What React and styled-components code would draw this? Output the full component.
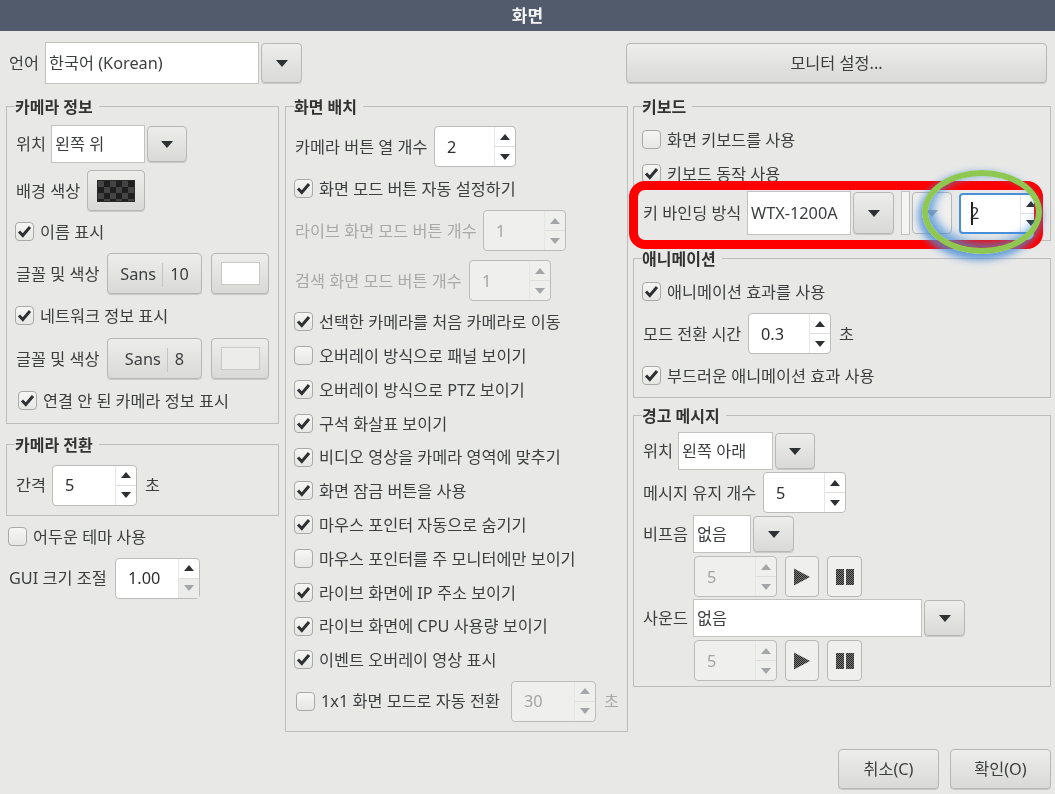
import React from "react";
import styled, { createGlobalStyle } from "styled-components";

const Global = createGlobalStyle`
  html, body { margin: 0; padding: 0; background: #e8e8e7; }
  * { box-sizing: border-box; }
`;

const Page = styled.div`
  position: relative;
  width: 1055px;
  height: 794px;
  overflow: hidden;
  background: #e8e8e7;
  color: #3c3e3f;
  font: 16.3px/1.2 "Noto Sans", "Noto Sans CJK KR", sans-serif;
  filter: blur(0.4px);
`;
const TitleBar = styled.div`
  height: 31px;
  padding-top: 2px;
  background: #515b6b;
  color: #f4f4f4;
  font-size: 17px;
  font-weight: 700;
  display: flex;
  align-items: center;
  justify-content: center;
`;
const Body = styled.div`
  padding: 11px 4px 0 6px;
`;
const TopRow = styled.div`
  display: flex;
  align-items: center;
  height: 42px;
`;
const Columns = styled.div`
  display: flex;
  align-items: flex-start;
  margin-top: 11px;
`;
const Column = styled.div`
  width: ${(p) => p.$w}px;
  margin-left: ${(p) => p.$ml || 0}px;
  flex: none;
`;
const Group = styled.fieldset`
  margin: ${(p) => p.$mt || 0}px 0 0;
  padding: ${(p) => p.$pt ?? 6}px 8px 0;
  height: ${(p) => p.$h}px;
  border: 1px solid #bdbdbb;
  min-width: 0;
`;
const Legend = styled.legend`
  padding: 0 6px 0 0;
  height: 22px;
  line-height: 24px;
  font-size: 16px;
  font-weight: 700;
  color: #333;
`;
const Row = styled.div`
  display: flex;
  align-items: center;
  height: ${(p) => p.$h}px;
  margin-top: ${(p) => p.$mt || 0}px;
  margin-left: ${(p) => p.$ml || 0}px;
`;
const Label = styled.span`
  flex: none;
  width: ${(p) => (p.$w ? `${p.$w}px` : "auto")};
  padding: 2px 0 0 ${(p) => p.$pl ?? 1}px;
  white-space: nowrap;
  color: ${(p) => (p.$off ? "#a9a9a9" : "inherit")};
`;
const Unit = styled.span`
  margin-left: 8px;
  padding-top: 2px;
  color: ${(p) => (p.$off ? "#a9a9a9" : "inherit")};
`;
const Field = styled.div`
  flex: none;
  width: ${(p) => p.$w}px;
  height: ${(p) => p.$h || 38}px;
  background: #fff;
  border: 1px solid #c2c2c0;
  padding: 2px 0 0 3px;
  display: flex;
  align-items: center;
  white-space: nowrap;
`;
const Btn = styled.div`
  flex: none;
  width: ${(p) => p.$w}px;
  height: ${(p) => p.$h || 40}px;
  margin-left: ${(p) => p.$ml || 0}px;
  display: flex;
  align-items: center;
  justify-content: center;
  border: 1px solid #b7b7b5;
  border-radius: 4px;
  background: ${(p) => (p.$flat ? "#efefee" : "linear-gradient(#ededec, #d9d9d8)")};
  box-shadow: ${(p) => (p.$flat ? "none" : "0 1px 0 #c9c9c7")};
  white-space: nowrap;
`;
const TextBtn = styled(Btn)`
  padding-top: 2px;
`;
const MonitorBtn = styled(TextBtn)`
  margin-left: auto;
  margin-right: 4px;
`;
const Tri = styled.i`
  display: block;
  width: 0;
  height: 0;
  border-left: 6px solid transparent;
  border-right: 6px solid transparent;
  border-top: 7px solid ${(p) => (p.$off ? "#a3a6a8" : "#2e3133")};
`;
const SmallDown = styled.i`
  display: block;
  width: 0;
  height: 0;
  border-left: 5px solid transparent;
  border-right: 5px solid transparent;
  border-top: 6px solid ${(p) => (p.$off ? "#a3a6a8" : "#2e3133")};
`;
const SmallUp = styled(SmallDown)`
  border-top: 0;
  border-bottom: 6px solid ${(p) => (p.$off ? "#a3a6a8" : "#2e3133")};
`;

function Combo({ w, h, bw = 41, children }) {
  return (
    <>
      <Field $w={w} $h={h}>{children}</Field>
      <Btn $w={bw} $h={(h || 38) - 2} $ml={2}><Tri /></Btn>
    </>
  );
}

const SpinBox = styled.div`
  position: relative;
  flex: none;
  width: ${(p) => p.$w || 83}px;
  height: ${(p) => p.$h || 41}px;
  display: flex;
  background: ${(p) => (p.$off ? "#efefee" : "#fff")};
  color: ${(p) => (p.$off ? "#a5a5a5" : "#2f2f2f")};
  border: ${(p) => (p.$focus ? "2px solid #4a90d9" : "1px solid #bcbcba")};
  border-radius: 4px;
`;
const SpinValue = styled.div`
  flex: 1;
  display: flex;
  align-items: center;
  padding: 2px 0 0 ${(p) => p.$pl ?? 12}px;
  border-right: 1px solid #e6e6e5;
`;
const SpinArrows = styled.div`
  flex: none;
  width: 20px;
  display: flex;
  flex-direction: column;
`;
const SpinArrow = styled.div`
  flex: 1;
  display: flex;
  align-items: center;
  justify-content: center;
  background: ${(p) => (p.$shade ? "#ececeb" : "transparent")};
  & + & { border-top: 1px solid #dededd; }
`;
const Caret = styled.b`
  position: absolute;
  left: 10px;
  top: 7px;
  width: 1.5px;
  height: 23px;
  background: #222;
`;

function Spin({ value, off, w, focus, pl, atMin }) {
  return (
    <SpinBox $off={off} $w={w} $focus={focus}>
      {focus && <Caret />}
      <SpinValue $pl={pl}>{value}</SpinValue>
      <SpinArrows>
        <SpinArrow><SmallUp $off={off} /></SpinArrow>
        <SpinArrow $shade={atMin}><SmallDown $off={off || atMin} /></SpinArrow>
      </SpinArrows>
    </SpinBox>
  );
}

const CheckWrap = styled.div`
  display: flex;
  align-items: center;
  flex: none;
  width: ${(p) => (p.$w ? `${p.$w}px` : "auto")};
  white-space: nowrap;
`;
const CheckText = styled.span`
  padding-top: 2px;
`;
const Box = styled.span`
  flex: none;
  width: 19px;
  height: 19px;
  margin-right: 6px;
  border: 1px solid #a9a9a7;
  border-radius: 4px;
  background: linear-gradient(#f6f6f5, #e6e6e5);
  display: flex;
  align-items: center;
  justify-content: center;
`;

function Check({ on, w, children }) {
  return (
    <CheckWrap $w={w}>
      <Box>
        {on && (
          <svg width="15" height="13" viewBox="0 0 15 13">
            <path d="M2 6.5 L5.8 10.5 L13 2" fill="none" stroke="#2e3133" strokeWidth="3" />
          </svg>
        )}
      </Box>
      <CheckText>{children}</CheckText>
    </CheckWrap>
  );
}

const Swatch = styled.span`
  display: block;
  width: ${(p) => p.$w}px;
  height: ${(p) => p.$h}px;
  background: #fff;
  border: 1px solid #c8c8c6;
`;
const GraySwatch = styled(Swatch)`
  background: #ececeb;
`;
const Checker = styled.span`
  display: block;
  width: 38px;
  height: 22px;
  border: 1px solid #2a2a2a;
  background: repeating-conic-gradient(#1f1f1f 0 25%, #444 0 50%) 0 0 / 12px 12px;
`;
const FontSep = styled.span`
  display: inline-block;
  width: 1px;
  height: 24px;
  margin: 0 7px 0 6px;
  background: #c4c4c2;
`;
const BlankBox = styled.div`
  flex: none;
  width: 9px;
  height: 44px;
  margin: 0 2px 0 7px;
  background: #f4f4f3;
  border: 1px solid #c2c2c0;
`;

const RedFrame = styled.div`
  position: absolute;
  left: 629px;
  top: 181px;
  width: 414px;
  height: 68px;
  border: 9px solid #fe0000;
  border-radius: 16px;
`;
const GreenRing = styled.div`
  position: absolute;
  left: 922px;
  top: 170px;
  width: 120px;
  height: 84px;
  border: 6px solid #8ec852;
  border-radius: 50%;
  box-shadow: -2px 4px 7px 2px rgba(70, 140, 215, 0.8), inset 4px -3px 8px 2px rgba(70, 140, 215, 0.75);
`;
const Footer = styled.div`
  display: flex;
  justify-content: flex-end;
  gap: 11px;
  margin-top: 17px;
`;

const Dither = ({ id }) => (
  <defs>
    <pattern id={id} width="2" height="2" patternUnits="userSpaceOnUse">
      <rect width="2" height="2" fill="#777" />
      <rect width="1" height="1" fill="#2a2a2a" />
      <rect x="1" y="1" width="1" height="1" fill="#2a2a2a" />
    </pattern>
  </defs>
);
const Play = ({ id }) => (
  <svg width="16" height="18" viewBox="0 0 16 18">
    <Dither id={id} />
    <path d="M0 0.5 L16 9 L0 17.5 Z" fill={`url(#${id})`} />
  </svg>
);
const Pause = ({ id }) => (
  <svg width="18" height="18" viewBox="0 0 18 18">
    <Dither id={id} />
    <path d="M0 1h8v16H0zM10 1h8v16h-8z" fill={`url(#${id})`} />
  </svg>
);

function Media({ id }) {
  return (
    <Row $h={41} $mt={3} $ml={52}>
      <Spin value="5" off />
      <Btn $w={34} $h={41} $ml={8} $flat><Play id={`pl${id}`} /></Btn>
      <Btn $w={35} $h={41} $ml={8} $flat><Pause id={`pa${id}`} /></Btn>
    </Row>
  );
}

const checks = [
  ["선택한 카메라를 처음 카메라로 이동", true],
  ["오버레이 방식으로 패널 보이기", false],
  ["오버레이 방식으로 PTZ 보이기", true],
  ["구석 화살표 보이기", true],
  ["비디오 영상을 카메라 영역에 맞추기", true],
  ["화면 잠금 버튼을 사용", true],
  ["마우스 포인터 자동으로 숨기기", true],
  ["마우스 포인터를 주 모니터에만 보이기", false],
  ["라이브 화면에 IP 주소 보이기", true],
  ["라이브 화면에 CPU 사용량 보이기", true],
  ["이벤트 오버레이 영상 표시", true],
];

export default function App() {
  return (
    <Page>
      <Global />
      <TitleBar>화면</TitleBar>
      <Body>
        <TopRow>
          <Label $w={39} $pl={3}>언어</Label>
          <Combo w={214} h={42}>한국어 (Korean)</Combo>
          <MonitorBtn $w={421} $h={40}>모니터 설정...</MonitorBtn>
        </TopRow>
        <Columns>
          <Column $w={273}>
            <Group $h={329} $pt={8}>
              <Legend>카메라 정보</Legend>
              <Row $h={38}>
                <Label $w={36}>위치</Label>
                <Combo w={94} bw={40}>왼쪽 위</Combo>
              </Row>
              <Row $h={41} $mt={7}>
                <Label $w={72}>배경 색상</Label>
                <Btn $w={58} $h={41}><Checker /></Btn>
              </Row>
              <Row $h={42}><Check on>이름 표시</Check></Row>
              <Row $h={41}>
                <Label $w={92}>글꼴 및 색상</Label>
                <TextBtn $w={95} $h={41}>Sans<FontSep />10</TextBtn>
                <Btn $w={58} $h={41} $ml={9}><Swatch $w={39} $h={23} /></Btn>
              </Row>
              <Row $h={44}><Check on>네트워크 정보 표시</Check></Row>
              <Row $h={41}>
                <Label $w={92}>글꼴 및 색상</Label>
                <TextBtn $w={95} $h={41}>Sans<FontSep />8</TextBtn>
                <Btn $w={58} $h={41} $ml={9}><GraySwatch $w={39} $h={23} /></Btn>
              </Row>
              <Row $h={43} $ml={3}><Check on>연결 안 된 카메라 정보 표시</Check></Row>
            </Group>
            <Group $h={83} $mt={9} $pt={10}>
              <Legend>카메라 전환</Legend>
              <Row $h={40}>
                <Label $w={37}>간격</Label>
                <Spin value="5" w={85} />
                <Unit>초</Unit>
              </Row>
            </Group>
            <Row $h={41} $ml={2}><Check>어두운 테마 사용</Check></Row>
            <Row $h={42}>
              <Label $w={109} $pl={3}>GUI 크기 조절</Label>
              <Spin value="1.00" w={85} atMin />
            </Row>
          </Column>

          <Column $w={343} $ml={6}>
            <Group $h={637} $pt={9}>
              <Legend>화면 배치</Legend>
              <Row $h={41}>
                <Label $w={140}>카메라 버튼 열 개수</Label>
                <Spin value="2" w={82} />
              </Row>
              <Row $h={43}><Check on>화면 모드 버튼 자동 설정하기</Check></Row>
              <Row $h={41}>
                <Label $w={189} $off>라이브 화면 모드 버튼 개수</Label>
                <Spin value="1" off />
              </Row>
              <Row $h={41} $mt={9}>
                <Label $w={175} $off>검색 화면 모드 버튼 개수</Label>
                <Spin value="1" off w={82} />
              </Row>
              <Row $h={33.8} $mt={4}><Check on={checks[0][1]}>{checks[0][0]}</Check></Row>
              {checks.slice(1).map(([text, on]) => (
                <Row $h={33.8} key={text}><Check on={on}>{text}</Check></Row>
              ))}
              <Row $h={41} $mt={4} $ml={2}>
                <Check w={215}>1x1 화면 모드로 자동 전환</Check>
                <Spin value="30" off w={85} />
                <Unit $off>초</Unit>
              </Row>
            </Group>
          </Column>

          <Column $w={418} $ml={5}>
            <Group $h={146} $pt={6}>
              <Legend>키보드</Legend>
              <Row $h={34}><Check>화면 키보드를 사용</Check></Row>
              <Row $h={33}><Check on>키보드 동작 사용</Check></Row>
              <Row $h={44} $mt={1}>
                <Label $w={105}>키 바인딩 방식</Label>
                <Combo w={104} h={44}>WTX-1200A</Combo>
                <BlankBox />
                <Btn $w={40} $h={42} $flat><Tri $off /></Btn>
                <Row $h={42} $ml={7}>
                  <Spin value="2" w={84} focus pl={9} />
                </Row>
              </Row>
            </Group>
            <Group $h={151} $mt={6}>
              <Legend>애니메이션</Legend>
              <Row $h={34}><Check on>애니메이션 효과를 사용</Check></Row>
              <Row $h={41} $mt={4}>
                <Label $w={106}>모드 전환 시간</Label>
                <Spin value="0.3" />
                <Unit>초</Unit>
              </Row>
              <Row $h={34} $mt={5}><Check on>부드러운 애니메이션 효과 사용</Check></Row>
            </Group>
            <Group $h={283} $mt={6}>
              <Legend>경고 메시지</Legend>
              <Row $h={38}>
                <Label $w={36}>위치</Label>
                <Combo w={95} bw={40}>왼쪽 아래</Combo>
              </Row>
              <Row $h={41} $mt={2}>
                <Label $w={121}>메시지 유지 개수</Label>
                <Spin value="5" />
              </Row>
              <Row $h={38} $mt={2}>
                <Label $w={51}>비프음</Label>
                <Combo w={58}>없음</Combo>
              </Row>
              <Media id="a" />
              <Row $h={38} $mt={2}>
                <Label $w={51}>사운드</Label>
                <Combo w={229}>없음</Combo>
              </Row>
              <Media id="b" />
            </Group>
          </Column>
        </Columns>
        <Footer>
          <TextBtn $w={101} $h={40}>취소(C)</TextBtn>
          <TextBtn $w={101} $h={40}>확인(O)</TextBtn>
        </Footer>
      </Body>
      <RedFrame />
      <GreenRing />
    </Page>
  );
}
